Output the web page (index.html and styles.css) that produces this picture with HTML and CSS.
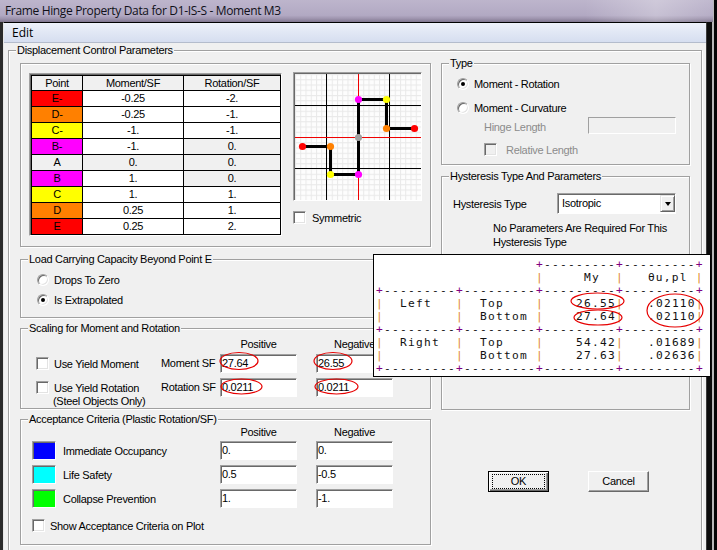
FILE: index.html
```html
<!DOCTYPE html>
<html lang="en">
<head>
<meta charset="utf-8">
<title>Frame Hinge Property Data</title>
<link rel="stylesheet" href="styles.css">
</head>
<body>
<div class="titlebar">Frame Hinge Property Data for D1-IS-S - Moment M3</div>
<div class="window">
  <div class="menubar"><span class="menu-item">Edit</span></div>
  <div class="client">
    <div class="group outer">
      <span class="gtitle">Displacement Control Parameters</span>
      <div class="cols">
        <div class="col-left">
          <div class="group box-points">
            <div class="pts">
              <div class="pgrid">
                <div class="hd">Point</div><div class="hd">Moment/SF</div><div class="hd">Rotation/SF</div>
                <div class="c-red">E-</div><div>-0.25</div><div>-2.</div>
                <div class="c-org">D-</div><div>-0.25</div><div>-1.</div>
                <div class="c-yel">C-</div><div>-1.</div><div>-1.</div>
                <div class="c-mag">B-</div><div>-1.</div><div class="c-gry">0.</div>
                <div class="c-gry">A</div><div class="c-gry">0.</div><div class="c-gry">0.</div>
                <div class="c-mag">B</div><div>1.</div><div class="c-gry">0.</div>
                <div class="c-yel">C</div><div>1.</div><div>1.</div>
                <div class="c-org">D</div><div>0.25</div><div>1.</div>
                <div class="c-red">E</div><div>0.25</div><div>2.</div>
              </div>
            </div>
            <div class="plot-col">
              <div class="plot">
                <svg width="126" height="126" viewBox="0 0 126 126">
                  <defs>
                    <pattern id="fine" width="5.25" height="5.25" patternUnits="userSpaceOnUse">
                      <path d="M0.5 0V5.25M0 0.5H5.25" stroke="#e9e9e9" stroke-width="1" fill="none"/>
                    </pattern>
                  </defs>
                  <rect width="126" height="126" fill="#fdfdfd"/>
                  <rect width="126" height="126" fill="url(#fine)"/>
                  <g shape-rendering="crispEdges" stroke-width="1" fill="none">
                    <path d="M31.5 0V126M94.5 0V126M0 31.5H126M0 94.5H126" stroke="#000"/>
                    <path d="M63.5 0V126M0 63.5H126" stroke="#f00000"/>
                  </g>
                  <path d="M7.5 72.5H35.5V100.5H63.5V25.5H91.5V54.5H119.5" stroke="#000" stroke-width="3" fill="none"/>
                  <g>
                    <circle cx="7.5" cy="72.5" r="3.6" fill="#ff0000"/>
                    <circle cx="35.5" cy="72.5" r="3.6" fill="#ff8000"/>
                    <circle cx="35.5" cy="100.5" r="3.6" fill="#ffff00"/>
                    <circle cx="63.5" cy="100.5" r="3.6" fill="#ff00ff"/>
                    <circle cx="63.5" cy="63.5" r="3.6" fill="#a0a0a0"/>
                    <circle cx="63.5" cy="25.5" r="3.6" fill="#ff00ff"/>
                    <circle cx="91.5" cy="25.5" r="3.6" fill="#ffff00"/>
                    <circle cx="91.5" cy="54.5" r="3.6" fill="#ff8000"/>
                    <circle cx="119.5" cy="54.5" r="3.6" fill="#ff0000"/>
                  </g>
                </svg>
              </div>
              <div class="chk-row sym"><span class="cb"></span><span>Symmetric</span></div>
            </div>
          </div>

          <div class="group load">
            <span class="gtitle">Load Carrying Capacity Beyond Point E</span>
            <div class="rrow first"><span class="radio"></span><span>Drops To Zero</span></div>
            <div class="rrow"><span class="radio on"></span><span>Is Extrapolated</span></div>
          </div>

          <div class="group scale">
            <span class="gtitle">Scaling for Moment and Rotation</span>
            <div class="hdr"><span>Positive</span><span>Negative</span></div>
            <div class="srow first">
              <div class="sa"><span class="cb"></span><span>Use Yield Moment</span></div>
              <span class="slbl">Moment SF</span>
              <span class="field">27.64</span>
              <span class="field neg">26.55</span>
            </div>
            <div class="srow two">
              <div class="sa-wrap">
                <div class="sa"><span class="cb"></span><span>Use Yield Rotation</span></div>
                <div class="sub">(Steel Objects Only)</div>
              </div>
              <span class="slbl">Rotation SF</span>
              <span class="field">0.0211</span>
              <span class="field neg">0.0211</span>
            </div>
          </div>

          <div class="group acc">
            <span class="gtitle">Acceptance Criteria (Plastic Rotation/SF)</span>
            <div class="hdr flush"><span>Positive</span><span>Negative</span></div>
            <div class="arow first">
              <div class="aca"><span class="sw sw-blue"></span><span>Immediate Occupancy</span></div>
              <span class="field">0.</span>
              <span class="field neg">0.</span>
            </div>
            <div class="arow">
              <div class="aca"><span class="sw sw-cyan"></span><span>Life Safety</span></div>
              <span class="field">0.5</span>
              <span class="field neg">-0.5</span>
            </div>
            <div class="arow">
              <div class="aca"><span class="sw sw-green"></span><span>Collapse Prevention</span></div>
              <span class="field">1.</span>
              <span class="field neg">-1.</span>
            </div>
            <div class="chk-row showacc"><span class="cb"></span><span>Show Acceptance Criteria on Plot</span></div>
          </div>
        </div>

        <div class="col-right">
          <div class="group type">
            <span class="gtitle">Type</span>
            <div class="trow first"><span class="radio on"></span><span>Moment - Rotation</span></div>
            <div class="trow second"><span class="radio"></span><span>Moment - Curvature</span></div>
            <div class="hinge-row">
              <span class="dis-lbl">Hinge Length</span>
              <span class="field dis"></span>
            </div>
            <div class="chk-row rel"><span class="cb dis"></span><span class="dis-txt">Relative Length</span></div>
          </div>

          <div class="group hyst">
            <span class="gtitle">Hysteresis Type And Parameters</span>
            <div class="hrow">
              <span class="hlbl">Hysteresis Type</span>
              <div class="select"><span class="sel-txt">Isotropic</span><span class="sel-btn"><span class="arrow"></span></span></div>
            </div>
            <div class="note">No Parameters Are Required For This<br>Hysteresis Type</div>
          </div>

          <div class="buttons">
            <span class="btn default"><span class="focus">OK</span></span>
            <span class="btn">Cancel</span>
          </div>
        </div>
      </div>
    </div>
  </div>
</div>

<div class="overlay"><pre>                    <i class="p">+</i>---------<i class="p">+</i>---------<i class="p">+</i>
                    <i class="o">|</i>     My  <i class="o">|</i>   θu,pl <i class="o">|</i>
<i class="p">+</i>---------<i class="p">+</i>---------<i class="p">+</i>---------<i class="p">+</i>---------<i class="p">+</i>
<i class="o">|</i>  Left   <i class="o">|</i>  Top    <i class="o">|</i>    26.55<i class="o">|</i>   .02110<i class="o">|</i>
<i class="o">|</i>         <i class="o">|</i>  Bottom <i class="o">|</i>    27.64<i class="o">|</i>   .02110<i class="o">|</i>
<i class="p">+</i>---------<i class="p">+</i>---------<i class="p">+</i>---------<i class="p">+</i>---------<i class="p">+</i>
<i class="o">|</i>  Right  <i class="o">|</i>  Top    <i class="o">|</i>    54.42<i class="o">|</i>   .01689<i class="o">|</i>
<i class="o">|</i>         <i class="o">|</i>  Bottom <i class="o">|</i>    27.63<i class="o">|</i>   .02636<i class="o">|</i>
<i class="p">+</i>---------<i class="p">+</i>---------<i class="p">+</i>---------<i class="p">+</i>---------<i class="p">+</i></pre></div>

<svg class="marks" width="717" height="550" viewBox="0 0 717 550">
  <g fill="none" stroke="#e60000" stroke-width="1.2">
    <ellipse cx="239" cy="361" rx="19" ry="8.5"/>
    <ellipse cx="333" cy="361" rx="19" ry="8.5"/>
    <ellipse cx="241.5" cy="386.5" rx="20.5" ry="7.5"/>
    <ellipse cx="336.5" cy="386.5" rx="21.5" ry="7.5"/>
    <ellipse cx="597.5" cy="301" rx="26.5" ry="8"/>
    <ellipse cx="598" cy="317.5" rx="24" ry="7.5"/>
    <ellipse cx="675" cy="310.5" rx="28" ry="16.5"/>
  </g>
</svg>
</body>
</html>
```

FILE: styles.css
```css
* { box-sizing: border-box; }
html, body { margin: 0; padding: 0; }
body {
  width: 717px;
  height: 550px;
  overflow: hidden;
  position: relative;
  background: linear-gradient(to right, #2a2a2a 0, #2a2a2a 707px, #0c0c0c 707px, #0c0c0c 712px, #b8b8b8 712px, #b8b8b8 714px, #050505 714px);
  font-family: "Liberation Sans", Arial, sans-serif;
  font-size: 11px;
  letter-spacing: -0.3px;
  color: #000;
}

.titlebar {
  width: 713px;
  height: 22px;
  padding-left: 5px;
  line-height: 22px;
  font-family: "Open Sans", "Noto Sans", sans-serif;
  font-size: 12px;
  letter-spacing: -0.35px;
  color: #101018;
  background:
    linear-gradient(to right, rgba(255,255,255,0) 82%, rgba(255,255,255,0.28) 92%, rgba(255,255,255,0.05) 100%),
    linear-gradient(to bottom, #bdb5cc 0%, #b2a9c3 70%, #9d93ad 85%, #7f758e 100%);
}

.window {
  margin-left: 3px;
  width: 704px;
  height: 528px;
  border-top: 1px solid #000;
  border-left: 1px solid #e6e6e6;
  border-right: 1px solid #3c3c3c;
  background: #f0f0f0;
}

.menubar {
  height: 20px;
  padding-left: 8px;
  line-height: 19px;
  font-family: "Open Sans", "Noto Sans", sans-serif;
  font-size: 12px;
  letter-spacing: 0;
  background: linear-gradient(to bottom, #eef1fa 0%, #e2e8f5 45%, #d6def0 100%);
  border-bottom: 1px solid #b4bccc;
}

.client { padding: 7px 4px 0 4px; }

/* group boxes */
.group {
  border: 1px solid #a0a0a0;
  box-shadow: inset 1px 1px 0 #fff, 1px 1px 0 #fff;
}
.gtitle {
  display: block;
  width: max-content;
  height: 13px;
  margin: -7px 0 0 7px;
  padding: 0 1px;
  line-height: 13px;
  background: #f0f0f0;
}

.outer { width: 694px; height: 520px; }
.cols { display: flex; gap: 10px; margin: 6px 0 0 11px; }
.col-left { width: 411px; display: flex; flex-direction: column; }
.col-right { width: 249px; display: flex; flex-direction: column; }

/* points box */
.box-points { height: 184px; display: flex; padding: 9px 0 0 8px; }
.pts {
  width: 253px;
  height: 163px;
  border: 1px solid;
  border-color: #a0a0a0 #fff #fff #a0a0a0;
  padding: 1px 0 0 1px;
  background: #696969;
}
.pgrid {
  width: 250px;
  height: 160px;
  display: grid;
  grid-template-columns: 50px 100px 96px;
  grid-template-rows: 14px repeat(9, 15px);
  gap: 1px;
  padding: 1px;
  background: #000;
}
.pgrid > div { background: #fff; text-align: center; line-height: 15px; }
.pgrid > .hd { background: #f0f0f0; line-height: 14px; }
.pgrid > .c-red { background: #ff0000; }
.pgrid > .c-org { background: #ff8000; }
.pgrid > .c-yel { background: #ffff00; }
.pgrid > .c-mag { background: #ff00ff; }
.pgrid > .c-gry { background: #f0f0f0; }

.plot-col { margin: -1px 0 0 11px; }
.plot {
  width: 129px;
  height: 129px;
  border: 1px solid;
  border-color: #a0a0a0 #fff #fff #a0a0a0;
  padding: 1px 0 0 1px;
  background: #696969;
}
.plot svg { display: block; }

/* checkboxes / radios */
.chk-row { display: flex; align-items: center; height: 13px; gap: 5px; }
.sym { margin-top: 10px; gap: 6px; }
.cb {
  flex: none;
  width: 13px;
  height: 13px;
  border: 1px solid;
  border-color: #a0a0a0 #fff #fff #a0a0a0;
  box-shadow: inset 1px 1px 0 #696969, inset -1px -1px 0 #e3e3e3;
  background: #fff;
}
.cb.dis { background: #f0f0f0; }
.radio {
  flex: none;
  width: 12px;
  height: 12px;
  border-radius: 50%;
  border: 1px solid;
  border-color: #a0a0a0 #fff #fff #a0a0a0;
  box-shadow: inset 1px 1px 0 #696969, inset -1px -1px 0 #e3e3e3;
  background: #fff;
}
.radio.on::after {
  content: "";
  display: block;
  width: 4px;
  height: 4px;
  margin: 3px auto 0;
  border-radius: 50%;
  background: #000;
}

/* load carrying */
.load { height: 59px; margin-top: 12px; }
.rrow { display: flex; align-items: center; gap: 5px; height: 20px; padding-left: 16px; }
.rrow.first { margin-top: 4px; }

/* fields */
.field {
  display: block;
  flex: none;
  width: 77px;
  height: 19px;
  border: 1px solid;
  border-color: #a0a0a0 #fff #fff #a0a0a0;
  box-shadow: inset 1px 1px 0 #696969;
  background: #fff;
  padding-left: 1px;
  line-height: 17px;
  white-space: nowrap;
}
.field.neg { margin-left: 19px; }

.hdr { display: flex; gap: 19px; margin: 3px 0 0 199px; line-height: 13px; height: 13px; }
.hdr span { width: 77px; text-align: center; }
.hdr.flush { margin-top: 0; }

/* scaling */
.scale { height: 81px; margin-top: 10px; }
.srow { display: flex; align-items: center; padding-left: 15px; }
.srow.first { margin-top: 3px; height: 19px; }
.srow.two { margin-top: 5px; align-items: flex-start; }
.sa { display: flex; align-items: center; gap: 5px; width: 125px; height: 19px; }
.sa-wrap { width: 125px; }
.sub { margin: -2px 0 0 17px; line-height: 13px; }
.slbl { width: 59px; line-height: 19px; }

/* acceptance */
.acc { height: 126px; margin-top: 10px; }
.arow { display: flex; align-items: center; height: 19px; margin-top: 5px; padding-left: 11px; }
.arow.first { margin-top: 2px; }
.aca { display: flex; align-items: center; gap: 7px; width: 188px; }
.sw {
  flex: none;
  width: 24px;
  height: 19px;
  border: 1px solid;
  border-color: #a0a0a0 #fff #fff #a0a0a0;
  box-shadow: inset 1px 1px 0 #696969;
}
.sw-blue { background: #0000ff; }
.sw-cyan { background: #00ffff; }
.sw-green { background: #00ff00; }
.showacc { margin-top: 11px; padding-left: 11px; }

/* type */
.type { height: 102px; }
.trow { display: flex; align-items: center; gap: 5px; padding-left: 15px; }
.trow.first { margin-top: 4px; height: 20px; }
.trow.second { margin-top: 4px; height: 19px; }
.hinge-row { display: flex; align-items: flex-start; padding-left: 42px; height: 17px; }
.dis-lbl { width: 104px; margin-top: 4px; line-height: 13px; color: #8c8c8c; }
.field.dis { width: 88px; height: 17px; background: #f0f0f0; box-shadow: none; }
.rel { margin-top: 9px; padding-left: 42px; gap: 9px; }
.dis-txt { color: #8c8c8c; }

/* hysteresis */
.hyst { height: 234px; margin-top: 11px; }
.hrow { display: flex; align-items: center; margin-top: 10px; padding-left: 11px; height: 21px; }
.hlbl { width: 104px; }
.select {
  display: flex;
  width: 119px;
  height: 21px;
  border: 1px solid;
  border-color: #a0a0a0 #fff #fff #a0a0a0;
  box-shadow: inset 1px 1px 0 #696969;
  background: #fff;
  padding: 1px 0 1px 4px;
}
.sel-txt { flex: 1; line-height: 17px; }
.sel-btn {
  display: flex;
  align-items: center;
  justify-content: center;
  width: 15px;
  height: 17px;
  background: #f0f0f0;
  border: 1px solid;
  border-color: #e3e3e3 #646464 #646464 #e3e3e3;
  box-shadow: inset 1px 1px 0 #fff, inset -1px -1px 0 #a0a0a0;
}
.arrow {
  width: 0;
  height: 0;
  border-left: 3.5px solid transparent;
  border-right: 3.5px solid transparent;
  border-top: 4px solid #000;
}
.note { margin-top: 7px; padding-left: 51px; line-height: 14px; }

/* buttons */
.buttons { display: flex; gap: 39px; margin-top: 61px; padding-left: 47px; }
.btn {
  display: flex;
  align-items: center;
  justify-content: center;
  width: 61px;
  height: 21px;
  background: #f0f0f0;
  border: 1px solid;
  border-color: #fff #696969 #696969 #fff;
  box-shadow: inset -1px -1px 0 #a0a0a0;
  line-height: 13px;
}
.btn.default {
  border: 1px solid #000;
  box-shadow: inset 1px 1px 0 #fff, inset -1px -1px 0 #696969, inset -2px -2px 0 #a0a0a0;
  padding: 2px 3px;
}
.focus {
  display: flex;
  align-items: center;
  justify-content: center;
  width: 100%;
  height: 100%;
  border: 1px dotted #000;
}

/* pasted text table overlay */
.overlay {
  position: absolute;
  left: 373px;
  top: 254px;
  width: 338px;
  height: 123px;
  padding: 3px 0 0 2px;
  background: #fff;
  border: 1px solid #000;
}
.overlay pre {
  margin: 0;
  font-family: "DejaVu Sans Mono", "Liberation Mono", monospace;
  font-size: 11.2px;
  line-height: 13px;
  letter-spacing: 1.26px;
  color: #111;
}
.overlay i { font-style: normal; }
.overlay .p { color: #800080; }
.overlay .o { color: #e0861a; }

.marks {
  position: absolute;
  left: 0;
  top: 0;
  pointer-events: none;
}
```
